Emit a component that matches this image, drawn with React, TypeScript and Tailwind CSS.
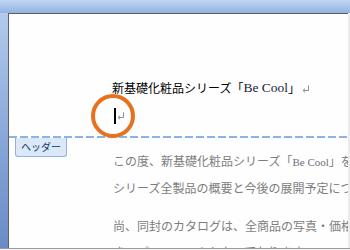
const jp = { fontFamily: '"Noto Sans CJK JP", "Noto Sans", sans-serif' };

function Ret({ className }: { className?: string }) {
  return (
    <svg width="8" height="8" viewBox="0 0 8 8" className={className}>
      <path d="M6.5 0.5 V5.5 H1.5" fill="none" stroke="#8c8c8c" strokeWidth="1" />
      <path d="M1 5.5 L3.2 3.5 M1 5.5 L3.2 7.5" fill="none" stroke="#8c8c8c" strokeWidth="1" />
    </svg>
  );
}

export default function App() {
  return (
    <div
      className="w-[350px] h-[250px] overflow-hidden flex flex-col bg-[#f2f2f2]"
      style={jp}
    >
      <div className="h-[13px] shrink-0 bg-[linear-gradient(180deg,#c3d6f1_0%,#b1c9ee_35%,#9dbbe8_75%,#93b2e2_100%)]" />
      <div className="flex flex-1 min-h-0">
        <div className="w-[8px] shrink-0 bg-[linear-gradient(180deg,#b3caec_0%,#9ab6e2_30%,#7c9dd2_70%,#6a8cc6_100%)]" />
        <div className="flex-1 min-w-0 relative overflow-hidden bg-[#fefefe] border-l border-t border-[#5f5f5f] border-r-[#9c9c9c] flex flex-col">
          {/* header area */}
          <div className="h-[122px] shrink-0 flex flex-col pl-[103px]">
            <div className="mt-[66px] h-[16px] flex items-center text-[12px] leading-[16px] text-black whitespace-nowrap">
              <span>新基礎化粧品シリーズ「</span>
              <span className="text-[13.5px] text-[#1c1c3a]" style={{ fontFamily: '"Liberation Serif", serif' }}>
                Be Cool
              </span>
              <span>」</span>
              <Ret className="ml-[2px] mt-[2px]" />
            </div>
            <div className="mt-[12px] h-[16px] flex items-center">
              <div className="w-[2px] h-[16px] bg-black ml-[2px]" />
              <Ret className="ml-[1px] -mt-[1px]" />
            </div>
          </div>
          <div className="h-[2px] shrink-0 bg-[repeating-linear-gradient(90deg,#8db3e2_0px,#8db3e2_8px,transparent_8px,transparent_11px)]" />
          {/* body */}
          <div className="pl-[104px] pt-[10px] text-[12px] leading-[26px] text-[#7d7d7d] whitespace-nowrap">
            <div>
              この度、新基礎化粧品シリーズ「
              <span style={{ fontFamily: '"Liberation Serif", serif' }} className="text-[11px] text-[#6f6f7a]">
                Be Cool
              </span>
              」を発売
            </div>
            <div>シリーズ全製品の概要と今後の展開予定につい</div>
            <div className="mt-[12px]">尚、同封のカタログは、全商品の写真・価格な</div>
            <div>きのパンフレットとなっております。</div>
          </div>
          {/* header tab */}
          <div className="absolute left-[6px] top-[124px] w-[52px] h-[19px] bg-[#dbe8f8] border border-[#8db3e2] border-t-0 rounded-b-[3px] flex items-center justify-center text-[10px] leading-none text-[#10336a]">
            ヘッダー
          </div>
          {/* orange circle */}
          <div className="absolute left-[82px] top-[80px] w-[44px] h-[44px] rounded-full border-[4px] border-[#e8711e]" />
        </div>
        <div className="w-[2px] shrink-0 bg-[#ececec]" />
      </div>
      <div className="h-[2px] shrink-0 border-t border-[#9c9c9c] bg-[#f0f0f0]" />
    </div>
  );
}
